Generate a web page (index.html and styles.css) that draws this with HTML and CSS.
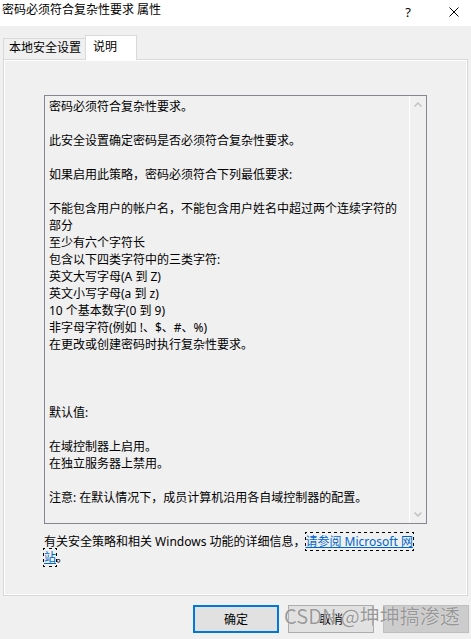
FILE: index.html
```html
<!DOCTYPE html>
<html lang="zh-CN">
<head>
<meta charset="utf-8">
<title>密码必须符合复杂性要求 属性</title>
<link rel="stylesheet" href="styles.css">
</head>
<body>
<div class="titlebar">
  <div class="title">密码必须符合复杂性要求 属性</div>
  <div class="caption-help">?</div>
  <div class="caption-close">
    <svg width="10" height="10" viewBox="0 0 10 10"><path d="M0.5 0.5 L9.5 9.5 M9.5 0.5 L0.5 9.5" stroke="#000" stroke-width="1" fill="none"/></svg>
  </div>
</div>
<div class="main">
  <div class="tabs">
    <div class="tab">本地安全设置</div>
    <div class="tab active">说明</div>
  </div>
  <div class="panel">
    <div class="textbox">
      <div class="text">密码必须符合复杂性要求。

此安全设置确定密码是否必须符合复杂性要求。

如果启用此策略，密码必须符合下列最低要求:

不能包含用户的帐户名，不能包含用户姓名中超过两个连续字符的部分
至少有六个字符长
包含以下四类字符中的三类字符:
英文大写字母(A 到 Z)
英文小写字母(a 到 z)
10 个基本数字(0 到 9)
非字母字符(例如 !、$、#、%)
在更改或创建密码时执行复杂性要求。



默认值:

在域控制器上启用。
在独立服务器上禁用。

注意: 在默认情况下，成员计算机沿用各自域控制器的配置。</div>
      <div class="scrollbar">
        <div class="arrow"><svg width="8" height="5" viewBox="0 0 8 5"><polyline points="0.5,4.5 4,1 7.5,4.5" fill="none" stroke="#c2c2c2" stroke-width="1.5"/></svg></div>
        <div class="arrow"><svg width="8" height="5" viewBox="0 0 8 5"><polyline points="0.5,0.5 4,4 7.5,0.5" fill="none" stroke="#c2c2c2" stroke-width="1.5"/></svg></div>
      </div>
    </div>
    <div class="info">有关安全策略和相关 Windows 功能的详细信息，<a class="link" href="#">请参阅 Microsoft 网<br>站</a>。</div>
  </div>
</div>
<div class="buttons">
  <button class="btn default">确定</button>
  <button class="btn">取消</button>
  <button class="btn disabled"></button>
</div>
<div class="watermark">CSDN @坤坤搞渗透</div>
</body>
</html>
```
FILE: styles.css
```css
html, body {
  margin: 0;
  padding: 0;
}
body {
  width: 471px;
  height: 639px;
  overflow: hidden;
  position: relative;
  background: #f0f0f0;
  color: #000;
  font-family: "Noto Sans", "Noto Sans CJK SC", sans-serif;
  font-size: 12px;
}
.titlebar {
  height: 26px;
  background: #fff;
  display: flex;
  align-items: flex-start;
}
.title {
  flex: 1;
  padding-left: 2px;
  line-height: 20px;
  white-space: nowrap;
}
.caption-help {
  width: 20px;
  height: 23px;
  margin-right: 31px;
  display: flex;
  align-items: center;
  justify-content: center;
  font-family: "Noto Sans", sans-serif;
  font-size: 13px;
}
.caption-close {
  width: 10px;
  height: 23px;
  margin-right: 12px;
  display: flex;
  align-items: center;
}
.caption-close svg {
  display: block;
}
.main {
  padding: 9px 3px 0 3px;
}
.tabs {
  display: flex;
  align-items: flex-end;
  height: 24px;
}
.tab {
  box-sizing: border-box;
  height: 21px;
  width: 82px;
  border-top: 1px solid #d9d9d9;
  border-left: 1px solid #d9d9d9;
  background: #f0f0f0;
  padding-left: 5px;
  line-height: 17px;
  white-space: nowrap;
}
.tab.active {
  width: 52px;
  height: 25px;
  border-right: 1px solid #d9d9d9;
  background: #fff;
  padding-left: 7px;
  padding-top: 2px;
  margin-bottom: -1px;
  position: relative;
  z-index: 1;
}
.panel {
  box-sizing: border-box;
  width: 465px;
  height: 537px;
  border: 1px solid #d9d9d9;
  box-shadow: inset 0 0 0 1px #fff;
  padding: 35px 0 0 40px;
}
.textbox {
  box-sizing: border-box;
  width: 383px;
  height: 429px;
  border: 1px solid #828790;
  display: flex;
  background: #f0f0f0;
}
.text {
  flex: 1;
  padding: 2px 6px 0 4px;
  line-height: 17px;
  white-space: pre-line;
}
.scrollbar {
  box-sizing: border-box;
  width: 17px;
  border-left: 1px solid #fff;
  display: flex;
  flex-direction: column;
  justify-content: space-between;
}
.arrow {
  height: 17px;
  display: flex;
  align-items: center;
  justify-content: center;
}
.arrow svg {
  display: block;
}
.info {
  width: 382px;
  margin-top: 10px;
  line-height: 16px;
}
.link {
  color: #0066cc;
  text-decoration: underline;
  outline: 1px dotted #000;
}
.buttons {
  display: flex;
  justify-content: flex-end;
  gap: 9px;
  padding: 9px 2px 0 0;
}
.btn {
  box-sizing: border-box;
  width: 86px;
  height: 28px;
  padding: 0;
  margin: 0;
  border: 1px solid #adadad;
  background: #e1e1e1;
  color: #000;
  font-family: inherit;
  font-size: 12px;
  border-radius: 0;
}
.btn.default {
  border: 2px solid #0078d7;
}
.btn.disabled {
  background: #cccccc;
  border-color: #bfbfbf;
}
.watermark {
  position: absolute;
  left: 284px;
  top: 602px;
  font-size: 20px;
  line-height: 28px;
  color: rgba(120, 120, 120, 0.75);
  text-shadow: 0 0 1px #fff;
  white-space: nowrap;
  pointer-events: none;
  font-family: "Noto Sans CJK SC", sans-serif;
}
```
